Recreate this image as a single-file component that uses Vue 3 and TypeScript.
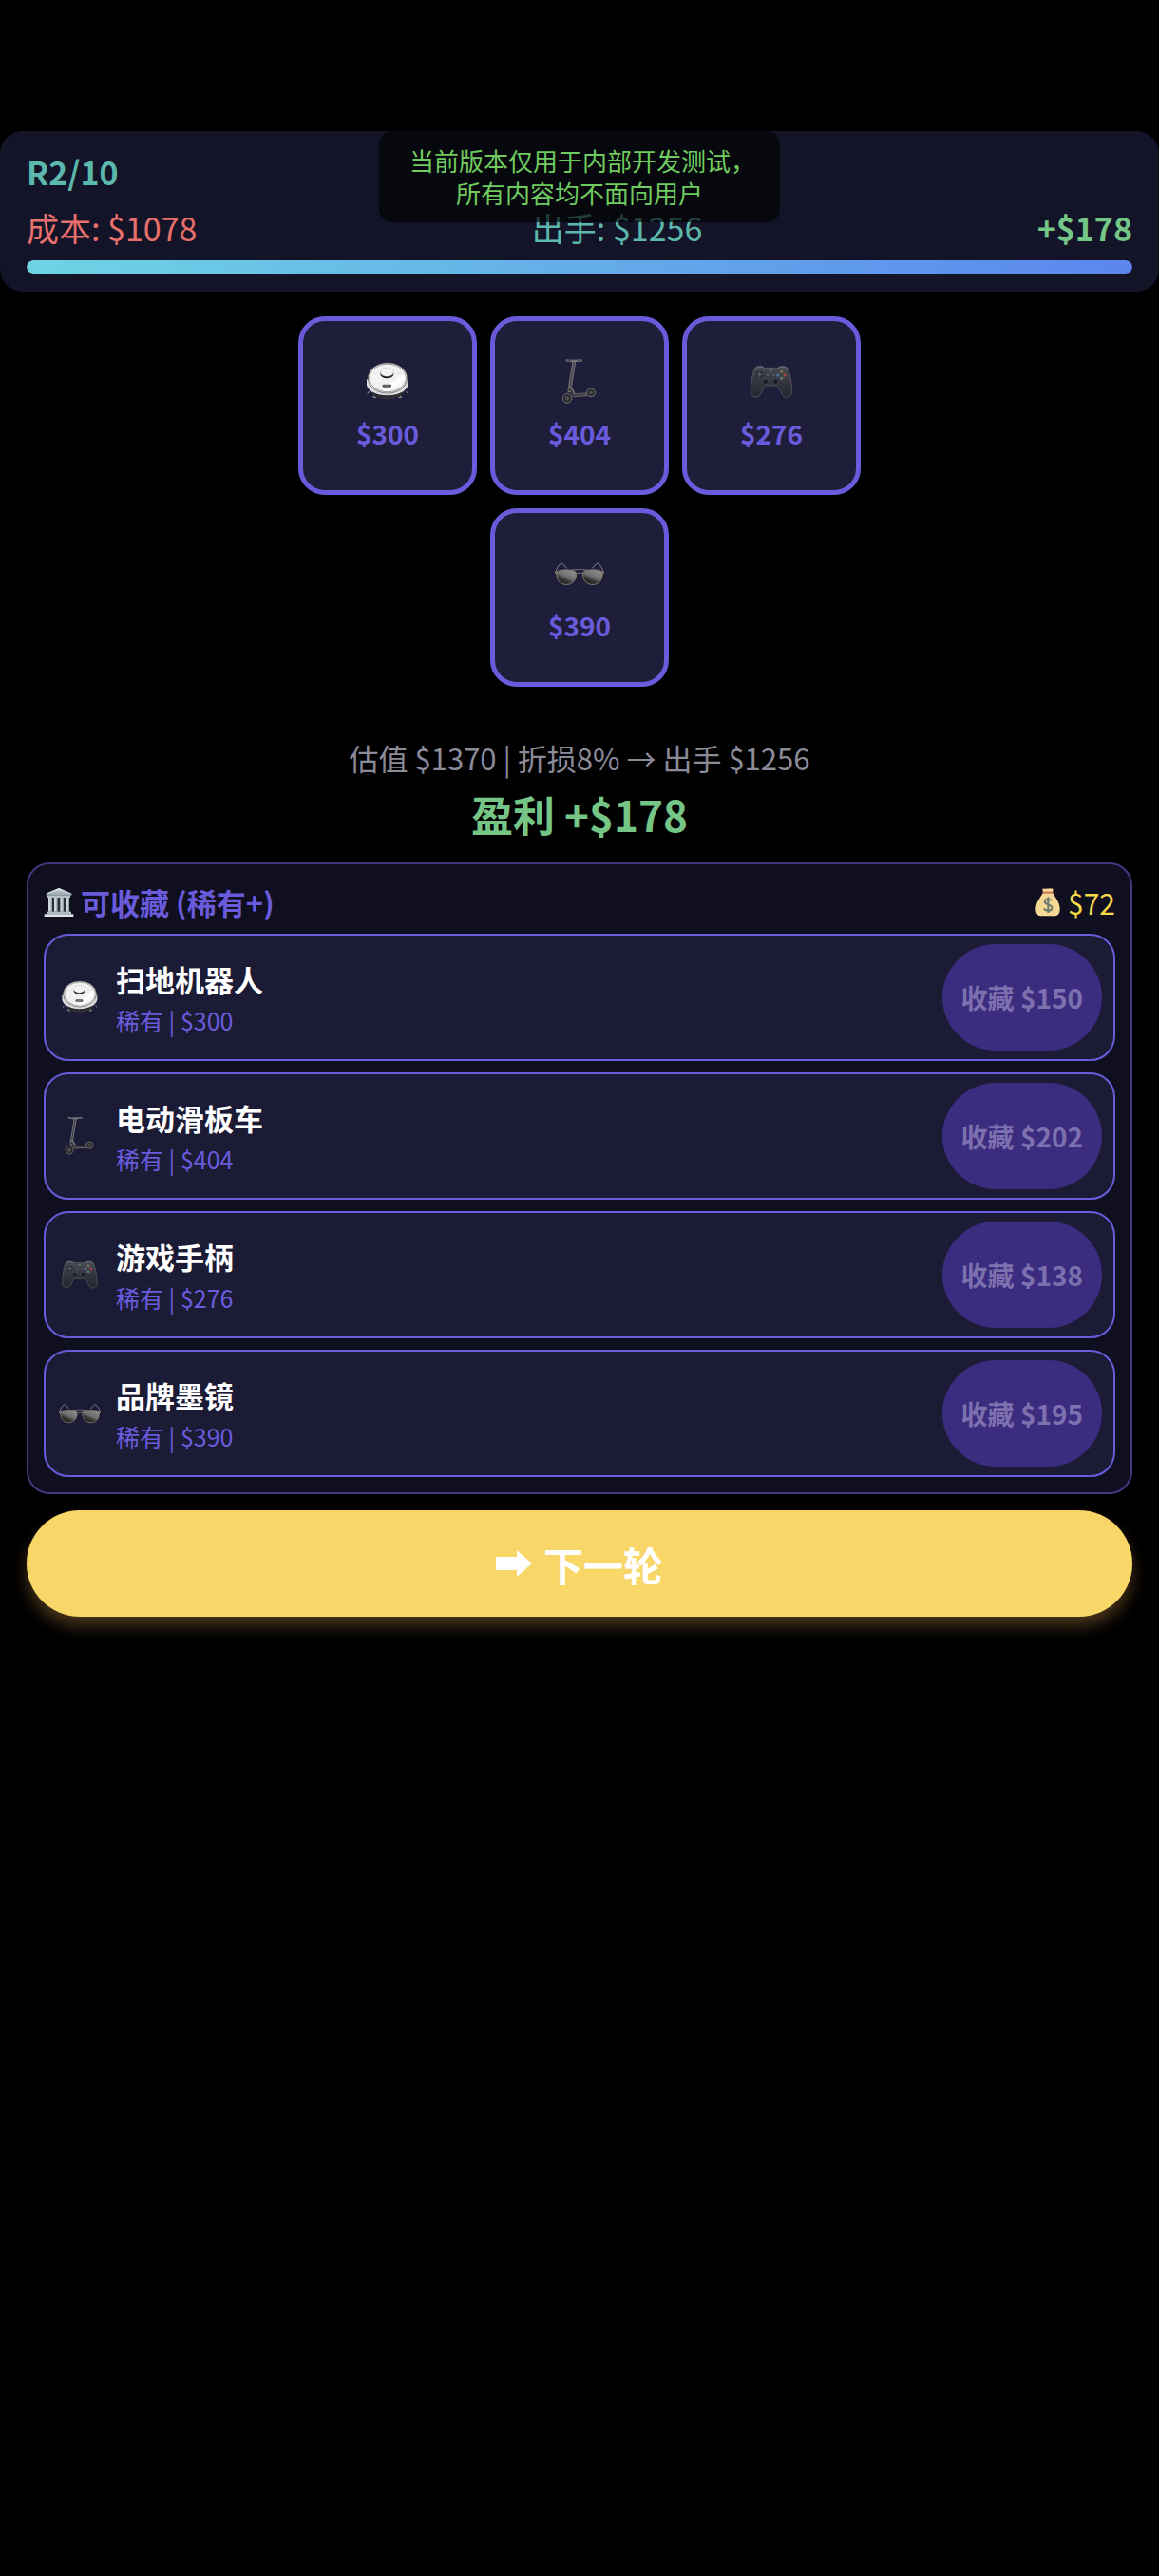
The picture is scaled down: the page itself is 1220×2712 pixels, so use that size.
<script setup lang="ts">
interface Item {
  id: string
  name: string
  rarity: string
  value: number
  cost: number
}

const items: Item[] = [
  { id: 'robot', name: '扫地机器人', rarity: '稀有', value: 300, cost: 150 },
  { id: 'scooter', name: '电动滑板车', rarity: '稀有', value: 404, cost: 202 },
  { id: 'gamepad', name: '游戏手柄', rarity: '稀有', value: 276, cost: 138 },
  { id: 'glasses', name: '品牌墨镜', rarity: '稀有', value: 390, cost: 195 },
]

const wallet = 72
const progress = 100
</script>

<template>
  <main class="game">
    <svg class="sprite" width="0" height="0" aria-hidden="true">
      <defs>
        <linearGradient id="lid" x1="0" y1="0" x2="1" y2="1">
          <stop offset="0" stop-color="#f4f4f4" />
          <stop offset="0.6" stop-color="#f0f0f0" />
          <stop offset="0.7" stop-color="#ffffff" />
          <stop offset="1" stop-color="#dedede" />
        </linearGradient>
        <linearGradient id="pad" x1="0" y1="0" x2="0" y2="1">
          <stop offset="0" stop-color="#4a4b54" />
          <stop offset="0.5" stop-color="#33353f" />
          <stop offset="1" stop-color="#24252e" />
        </linearGradient>
        <linearGradient id="lens" x1="0" y1="1" x2="0.6" y2="0">
          <stop offset="0" stop-color="#191919" />
          <stop offset="0.4" stop-color="#333333" />
          <stop offset="0.6" stop-color="#6c6c6c" />
          <stop offset="1" stop-color="#8a8a8a" />
        </linearGradient>
        <linearGradient id="roof" x1="0" y1="0" x2="0" y2="1">
          <stop offset="0" stop-color="#c3ccd2" />
          <stop offset="1" stop-color="#9aa7b0" />
        </linearGradient>

        <symbol id="icon-robot" viewBox="0 0 156 156">
          <path d="M20 108l-6 8M34 117l4 13M120 117l-3 13M137 108l5 7M30 125l12 3M112 128l12-2" stroke="#8d8d92" stroke-width="3" fill="none" />
          <ellipse cx="77" cy="99" rx="52" ry="32" fill="#26262a" stroke="#77777c" stroke-width="2" />
          <path d="M12 70v18c4 20 30 33 65 33s61-13 66-33V70z" fill="#dcdcdc" />
          <path d="M31 110c12 9 28 13 46 13s35-4 47-13v10c-13 8-29 12-47 12s-34-4-46-12z" fill="#2e2e32" />
          <ellipse cx="78" cy="66" rx="62" ry="48" fill="#f2f2f2" stroke="#48484b" stroke-width="2" />
          <ellipse cx="78" cy="66" rx="58" ry="44" fill="url(#lid)" stroke="#6e6e70" stroke-width="2" />
          <path d="M22 51H134" stroke="#cfcfcf" stroke-width="1" />
          <ellipse cx="76" cy="53" rx="21" ry="14" fill="#1d1d1f" />
          <ellipse cx="76" cy="47" rx="21" ry="14" fill="#f3f3f3" stroke="#a5a5a5" stroke-width="1" />
          <rect x="62" y="86" width="28" height="9" rx="4" fill="#49494b" />
          <path d="M67 90h18" stroke="#a8a8a8" stroke-width="2" />
        </symbol>

        <symbol id="icon-scooter" viewBox="0 0 156 156">
          <path d="M61 14L46 106" stroke="#77777b" stroke-width="11" stroke-linecap="round" />
          <path d="M61 14L46 106" stroke="#454549" stroke-width="5" stroke-linecap="round" />
          <path d="M38 10l20 2 26-2" stroke="#737377" stroke-width="7" fill="none" stroke-linecap="round" />
          <path d="M40 10h12M72 10h11" stroke="#2e2e31" stroke-width="2" />
          <path d="M42 96c10 2 15 12 18 24l39-2 17-14" stroke="#737376" stroke-width="11" fill="none" stroke-linejoin="round" />
          <path d="M42 98c8 4 14 12 16 22l43-2 14-12" stroke="#3b3b3e" stroke-width="6" fill="none" />
          <ellipse cx="39" cy="130" rx="14" ry="15" fill="#2a2a2c" stroke="#737376" stroke-width="3" />
          <ellipse cx="39" cy="130" rx="6" ry="7" fill="#505054" />
          <ellipse cx="114" cy="112" rx="14" ry="13" fill="#2c2c2f" stroke="#737376" stroke-width="3" />
          <ellipse cx="114" cy="112" rx="6" ry="5" fill="#505054" />
        </symbol>

        <symbol id="icon-gamepad" viewBox="0 0 156 156">
          <path d="M24 38c4-10 22-13 31-4h44c9-9 28-6 32 5 7 17 11 44 12 68 0 24-24 28-31 10l-10-18c-4-7-8-9-14-9H66c-6 0-9 3-13 9l-9 17c-8 17-32 12-32-8 1-24 5-50 12-70z" fill="url(#pad)" stroke="#64656b" stroke-width="2" />
          <path d="M28 35c7-6 18-7 26-2M100 34c9-6 20-5 27 2" stroke="#87878c" stroke-width="2" fill="none" />
          <circle cx="41" cy="55" r="12" fill="#262832" stroke="#565861" stroke-width="1" />
          <path d="M41 47v16M33 55h16" stroke="#60636e" stroke-width="4" />
          <circle cx="59" cy="77" r="9" fill="#1c1d25" stroke="#51535d" stroke-width="2" />
          <circle cx="91" cy="77" r="9" fill="#1c1d25" stroke="#51535d" stroke-width="2" />
          <rect x="72" y="39" width="9" height="7" rx="3" fill="#527064" />
          <circle cx="66" cy="57" r="3" fill="#5a5e6d" />
          <circle cx="86" cy="57" r="3" fill="#5a5e6d" />
          <circle cx="110" cy="46" r="5" fill="#7a754f" />
          <circle cx="99" cy="57" r="5" fill="#4b719b" />
          <circle cx="120" cy="57" r="5" fill="#a5493f" />
          <circle cx="110" cy="67" r="5" fill="#597e65" />
        </symbol>

        <symbol id="icon-glasses" viewBox="0 0 156 156">
          <path d="M3 72L8 58 18 46q4-2 8 2l12 13M153 72l-5-14-10-12q-4-2-8 2l-12 13" stroke="#8d8782" stroke-width="3" fill="none" />
          <path d="M0 72l10 10M156 72l-10 10" stroke="#a08a78" stroke-width="4" />
          <path d="M50 66q28-3 56 0M64 78q14-6 28 0" stroke="#777270" stroke-width="3" fill="none" />
          <path d="M7 71q20-9 51-3c11 2 12 14 7 26-7 17-27 23-43 15C8 102 3 83 7 71z" fill="url(#lens)" stroke="#857568" stroke-width="3" />
          <path d="M149 71q-20-9-51-3c-11 2-12 14-7 26 7 17 27 23 43 15 14-7 19-26 15-38z" fill="url(#lens)" stroke="#857568" stroke-width="3" />
        </symbol>

        <symbol id="icon-museum" viewBox="0 0 96 96">
          <rect x="16" y="28" width="66" height="50" fill="#293238" />
          <path d="M48 3L88 20v6H8v-6z" fill="url(#roof)" />
          <path d="M48 3L88 20l-4 1L48 8 12 21l-4-1z" fill="#dce3e7" />
          <path d="M12 26h72v7H12z" fill="#b6c1c8" />
          <path d="M15 33h11v44H15zM33 33h10v44H33zM52 33h10v44H52zM70 33h11v44H70z" fill="#cbd3d8" />
          <path d="M23 33h3v44h-3zM40 33h3v44h-3zM59 33h3v44h-3zM78 33h3v44h-3z" fill="#96a4ad" />
          <path d="M9 77h78v8H9z" fill="#b3bec5" />
          <path d="M2 85h92v8H2z" fill="#dfe5e8" />
        </symbol>

        <symbol id="icon-money" viewBox="0 0 96 96">
          <path d="M33 18h30c9 15 23 29 23 52 0 16-8 21-18 21H28C18 91 10 86 10 70c0-23 14-37 23-52z" fill="#f7d894" />
          <path d="M31 6c4-4 8 1 11-1s8 1 12-1 7 2 11 1l-2 13H33z" fill="#f7d894" />
          <path d="M33 17h30" stroke="#c26b48" stroke-width="5" stroke-linecap="round" />
          <path d="M60 43c-3-6-22-8-22 3 0 12 23 6 23 19 0 12-21 11-25 2M49 31v50" stroke="#697b70" stroke-width="6" fill="none" />
        </symbol>
      </defs>
    </svg>

    <header class="status">
      <div class="round">R2/10</div>
      <div class="figures">
        <span class="cost">成本: $1078</span>
        <span class="sale">出手: $1256</span>
        <strong class="gain">+$178</strong>
      </div>
      <div class="track" role="progressbar" aria-label="进度" :aria-valuenow="progress">
        <div class="fill" :style="{ width: progress + '%' }"></div>
      </div>
      <p class="notice">当前版本仅用于内部开发测试，<br>所有内容均不面向用户</p>
    </header>

    <ul class="cards">
      <li v-for="item in items" :key="item.id" class="card">
        <svg class="card-icon" aria-hidden="true"><use :href="'#icon-' + item.id" /></svg>
        <span class="card-price">${{ item.value }}</span>
      </li>
    </ul>

    <section class="summary">
      <p class="estimate">估值 $1370 | 折损8% → 出手 $1256</p>
      <p class="profit">盈利 +$178</p>
    </section>

    <section class="collect">
      <div class="collect-head">
        <h2 class="collect-title">
          <svg class="emoji" aria-hidden="true"><use href="#icon-museum" /></svg>
          可收藏 (稀有+)
        </h2>
        <span class="wallet">
          <svg class="emoji" aria-hidden="true"><use href="#icon-money" /></svg>
          ${{ wallet }}
        </span>
      </div>
      <ul class="rows">
        <li v-for="item in items" :key="item.id" class="row">
          <svg class="row-icon" aria-hidden="true"><use :href="'#icon-' + item.id" /></svg>
          <div class="row-text">
            <span class="row-name">{{ item.name }}</span>
            <span class="row-meta">{{ item.rarity }} | ${{ item.value }}</span>
          </div>
          <button class="keep" type="button" disabled>收藏 ${{ item.cost }}</button>
        </li>
      </ul>
    </section>

    <button class="next" type="button">
      <svg class="arrow" viewBox="0 0 38 28" aria-hidden="true">
        <path d="M0 7h22V0l16 14-16 14v-7H0z" fill="#ffffff" />
      </svg>
      下一轮
    </button>
  </main>
</template>

<style>
body {
  margin: 0;
  background: #000000;
}
</style>

<style scoped>
.game {
  box-sizing: border-box;
  min-height: 100vh;
  padding-top: 138px;
  background: #000000;
  color: #ffffff;
  font-family: "Noto Sans CJK SC", sans-serif;
}

.sprite {
  display: block;
}

.status {
  position: relative;
  display: flex;
  flex-direction: column;
  gap: 9px;
  padding: 18px 28px 19px;
  border-radius: 24px;
  background: #141428;
  font-size: 34px;
  line-height: 50px;
}

.round {
  color: #5cb8ac;
  font-weight: 700;
}

.figures {
  display: flex;
  justify-content: space-between;
}

.cost {
  color: #e8706c;
}

.sale {
  color: #5cb8ac;
}

.gain {
  color: #75c686;
}

.track {
  height: 14px;
  overflow: hidden;
  border-radius: 7px;
  background: #26264a;
}

.fill {
  height: 100%;
  border-radius: 7px;
  background: linear-gradient(90deg, #6ed4e4, #5b86ee);
}

.notice {
  position: absolute;
  top: 0;
  left: 50%;
  box-sizing: border-box;
  width: 422px;
  margin: 0;
  padding: 14px 32px;
  border-radius: 14px;
  transform: translateX(-50%);
  background: rgba(0, 0, 0, 0.65);
  color: #6fcb5f;
  font-size: 26px;
  line-height: 34px;
  text-align: center;
  white-space: nowrap;
}

.cards {
  display: flex;
  flex-wrap: wrap;
  justify-content: center;
  gap: 14px;
  max-width: 620px;
  margin: 26px auto 0;
  padding: 0;
  list-style: none;
}

.card {
  display: flex;
  flex-direction: column;
  align-items: center;
  justify-content: center;
  gap: 8px;
  box-sizing: border-box;
  width: 188px;
  height: 188px;
  padding-bottom: 2px;
  border: 5px solid #6a5bdc;
  border-radius: 28px;
  background: #1f1e3a;
}

.card-icon {
  width: 52px;
  height: 52px;
  overflow: visible;
}

.card-price {
  color: #6a5bdc;
  font-size: 28px;
  font-weight: 700;
  line-height: 40px;
}

.summary {
  display: flex;
  flex-direction: column;
  gap: 5px;
  margin-top: 53px;
  text-align: center;
}

.estimate {
  margin: 0;
  color: #8b8b99;
  font-size: 31px;
  line-height: 44px;
}

.profit {
  margin: 0;
  color: #75c686;
  font-size: 44px;
  font-weight: 700;
  line-height: 64px;
}

.collect {
  margin: 19px 28px 0;
  padding: 16px;
  border: 2px solid #43387f;
  border-radius: 24px;
  background: #0f0f20;
}

.collect-head {
  display: flex;
  align-items: center;
  justify-content: space-between;
  margin-bottom: 9px;
  line-height: 48px;
}

.collect-title,
.wallet {
  display: flex;
  align-items: center;
  margin: 0;
}

.collect-title {
  gap: 7px;
  color: #6a5bdc;
  font-size: 31px;
  font-weight: 700;
}

.wallet {
  gap: 5px;
  color: #f8d948;
  font-size: 30px;
}

.emoji {
  width: 32px;
  height: 32px;
}

.rows {
  display: flex;
  flex-direction: column;
  gap: 12px;
  margin: 0;
  padding: 0;
  list-style: none;
}

.row {
  display: flex;
  align-items: center;
  gap: 16px;
  padding: 9px 12px 9px 14px;
  border: 2px solid #6a5bdc;
  border-radius: 26px;
  background: #1c1b35;
}

.row-icon {
  width: 44px;
  height: 44px;
  overflow: visible;
}

.row-text {
  display: flex;
  flex: 1;
  flex-direction: column;
}

.row-name {
  font-size: 31px;
  font-weight: 700;
  line-height: 48px;
}

.row-meta {
  color: #6a5bdc;
  font-size: 25px;
  line-height: 38px;
}

.keep {
  height: 112px;
  padding: 0 20px;
  border: 0;
  border-radius: 56px;
  background: #3b2c80;
  color: #7d70ae;
  font: 700 28px "Noto Sans CJK SC", sans-serif;
}

.next {
  display: flex;
  align-items: center;
  justify-content: center;
  gap: 12px;
  width: calc(100% - 56px);
  height: 112px;
  margin: 17px 28px 0;
  border: 0;
  border-radius: 56px;
  background: #f8d768;
  box-shadow: 0 10px 16px rgba(224, 160, 80, 0.32);
  color: #ffffff;
  font: 700 42px "Noto Sans CJK SC", sans-serif;
}

.arrow {
  width: 38px;
  height: 28px;
}
</style>
